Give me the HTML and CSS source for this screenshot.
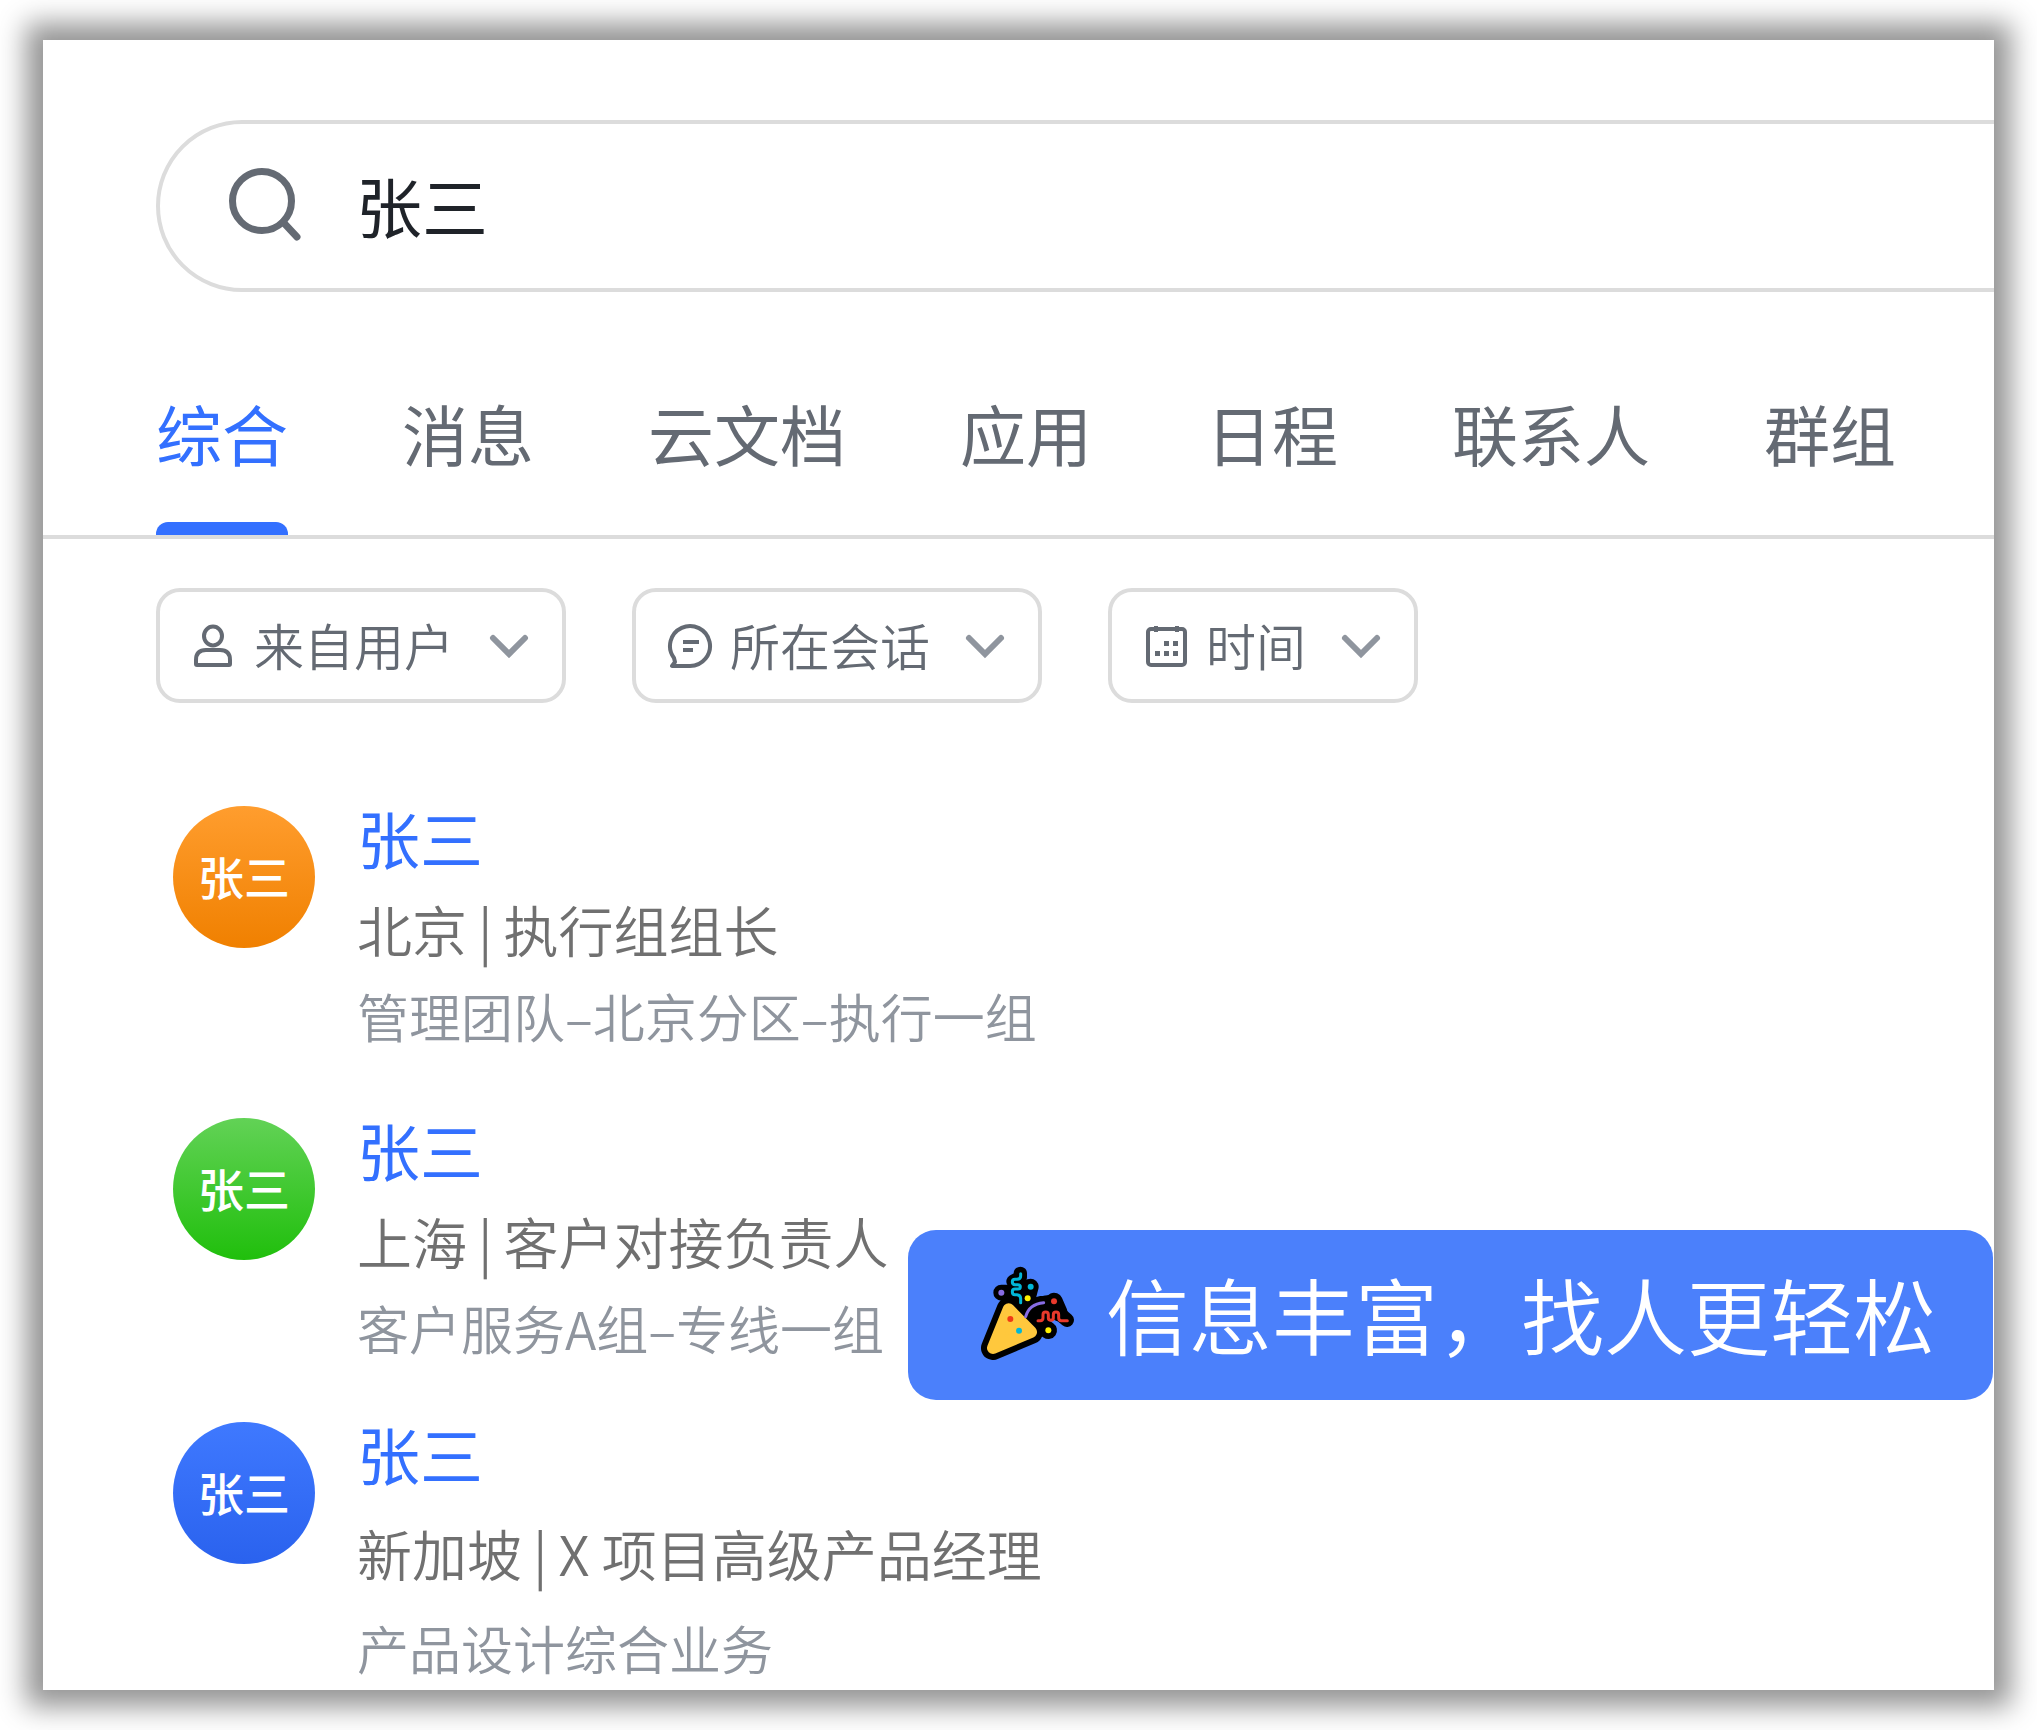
FILE: index.html
```html
<!DOCTYPE html>
<html lang="zh-CN">
<head>
	<meta charset="UTF-8">
	<meta name="viewport" content="width=device-width, initial-scale=1">
	<title>搜索</title>
	<link rel="stylesheet" href="styles.css">
</head>
<body>
	<div class="card">
		<label class="search">
			<svg class="search-icon" viewBox="0 0 76 76" aria-hidden="true">
				<circle cx="34" cy="33" r="29.5"/>
				<path d="M55 54L69 69"/>
			</svg>
			<input type="text" class="search-input" aria-label="搜索" value="张三">
		</label>

		<nav class="tabs">
			<a href="#" class="active">综合</a>
			<a href="#">消息</a>
			<a href="#">云文档</a>
			<a href="#">应用</a>
			<a href="#">日程</a>
			<a href="#">联系人</a>
			<a href="#">群组</a>
		</nav>

		<div class="filters">
			<label class="filter">
				<svg class="filter-icon" viewBox="0 0 48 48" aria-hidden="true">
					<ellipse cx="23" cy="14" rx="9" ry="9.5"/>
					<path d="M6 42V38Q6 28 16 28H30Q40 28 40 38V42Q40 43 39 43H7Q6 43 6 42Z"/>
				</svg>
				<select aria-label="来自用户"><option>来自用户</option></select>
				<svg class="arrow" viewBox="0 0 42 28" aria-hidden="true"><path d="M5 6L21 22L37 6"/></svg>
			</label>
			<label class="filter">
				<svg class="filter-icon" viewBox="0 0 48 48" aria-hidden="true">
					<path d="M6 44H24A20 20 0 1 0 8 36L9 40Z"/>
					<path d="M17 20H33M17 28H27"/>
				</svg>
				<select aria-label="所在会话"><option>所在会话</option></select>
				<svg class="arrow" viewBox="0 0 42 28" aria-hidden="true"><path d="M5 6L21 22L37 6"/></svg>
			</label>
			<label class="filter">
				<svg class="filter-icon" viewBox="0 0 48 48" aria-hidden="true">
					<rect x="6" y="7" width="37" height="36" rx="3"/>
					<path d="M14 4V10M35 4V10"/>
					<path class="dots" d="M22 19h5v5h-5zM31 19h5v5h-5zM13 29h5v5h-5zM22 29h5v5h-5zM31 29h5v5h-5z"/>
				</svg>
				<select aria-label="时间"><option>时间</option></select>
				<svg class="arrow" viewBox="0 0 42 28" aria-hidden="true"><path d="M5 6L21 22L37 6"/></svg>
			</label>
		</div>

		<ul class="results">
			<li class="result">
				<span class="avatar orange">张三</span>
				<div class="info">
					<a href="#" class="name">张三</a>
					<p class="job">北京<span class="bar">|</span>执行组组长</p>
					<p class="dept">管理团队–北京分区–执行一组</p>
				</div>
			</li>
			<li class="result">
				<span class="avatar green">张三</span>
				<div class="info">
					<a href="#" class="name">张三</a>
					<p class="job">上海<span class="bar">|</span>客户对接负责人</p>
					<p class="dept">客户服务A组–专线一组</p>
				</div>
			</li>
			<li class="result result-last">
				<span class="avatar blue">张三</span>
				<div class="info">
					<a href="#" class="name">张三</a>
					<p class="job">新加坡<span class="bar">|</span>X 项目高级产品经理</p>
					<p class="dept">产品设计综合业务</p>
				</div>
			</li>
		</ul>

		<div class="banner">
			<svg class="party" viewBox="32 50 282 282" aria-hidden="true">
				<!-- black outline -->
				<g class="outline">
					<path d="M115 180L68 296L182 248Z" stroke-width="72"/>
					<path d="M150 72V84L128 96L150 114L130 134L150 160" stroke-width="40"/>
					<path d="M93 130L140 130L181 112L172 147" stroke-width="48"/>
					<path d="M172 200Q185 160 222 160L251 156" stroke-width="42"/>
					<path d="M205 212L225 194L250 190L264 190L290 212" stroke-width="42"/>
					<path d="M251 156L266 190M200 220L234 243" stroke-width="52"/>
				</g>
				<!-- cone -->
				<path d="M115 180L68 296L182 248Z" fill="#ffc83d" stroke="#ffc83d" stroke-width="36" stroke-linejoin="round"/>
				<circle cx="120" cy="209" r="9" fill="#f03a17"/>
				<circle cx="146" cy="244" r="9" fill="#00b7d8"/>
				<!-- streamers -->
				<g fill="none" stroke-width="9" stroke-linecap="round">
					<path d="M151 73V80Q151 90 140 90H134Q126 90 126 98Q126 106 134 106H142Q150 106 150 112Q150 119 142 119H134Q126 119 126 127Q126 136 134 136H140Q151 137 151 148V160" stroke="#00b7d8"/>
					<path d="M166 202Q176 164 220 160" stroke="#886ce4"/>
					<path d="M203 214H210Q218 214 218 206V196Q218 188 226 188Q234 188 234 196V206Q234 213 242 213Q249 213 249 206V196Q249 188 257 188Q265 188 265 196V206Q265 214 273 214H291" stroke="#e8392b"/>
				</g>
				<circle cx="93" cy="130" r="9" fill="#886ce4"/>
				<circle cx="181" cy="112" r="9" fill="#00b7d8"/>
				<circle cx="172" cy="147" r="9" fill="#fff100"/>
				<circle cx="251" cy="156" r="9" fill="#e8392b"/>
				<circle cx="234" cy="243" r="9" fill="#fff100"/>
			</svg>
			<span>信息丰富，找人更轻松</span>
		</div>
	</div>
</body>
</html>
```
FILE: styles.css
```css
*{
	box-sizing: border-box;
}
body,ul,p{
	margin: 0;
	padding: 0;
}
body{
	padding: 40px 43px;
	background: #fff;
	color: #646a73;
	font-family: "Noto Sans CJK SC", sans-serif;
	font-weight: 350;
}
ul{
	list-style-type: none;
}
a{
	color: inherit;
	text-decoration: none;
}
.card{
	position: relative;
	overflow: hidden;
	padding: 80px 0 2px;
	background: #fff;
	box-shadow: 0 0 26px 17px rgba(0,0,0,.42);
}

/* search box, runs out past the right edge */
.search{
	display: flex;
	align-items: center;
	gap: 52px;
	height: 172px;
	margin: 0 -100px 0 113px;
	padding-left: 68px;
	border: 4px solid #dcdcdc;
	border-radius: 86px;
}
.search-icon{
	flex: none;
	width: 76px;
	height: 76px;
	fill: none;
	stroke: #646a73;
	stroke-width: 7;
	stroke-linecap: round;
}
.search-input{
	flex: 1;
	min-width: 0;
	height: 100px;
	padding: 0 0 4px;
	border: 0;
	outline: 0;
	background: none;
	color: #1f2329;
	font: inherit;
	font-size: 66px;
	font-weight: 400;
}

/* tabs */
.tabs{
	display: flex;
	gap: 114px;
	margin-top: 96px;
	padding-left: 113px;
	border-bottom: 4px solid #dcdcdc;
	font-size: 66px;
	font-weight: 400;
	line-height: 88px;
	white-space: nowrap;
}
.tabs a{
	position: relative;
	padding-bottom: 59px;
}
.tabs .active{
	color: #3370ff;
}
.tabs .active::after{
	content: "";
	position: absolute;
	left: 0;
	right: 0;
	bottom: 0;
	height: 13px;
	border-radius: 12px 12px 0 0;
	background: #3370ff;
}

/* filters */
.filters{
	display: flex;
	gap: 66px;
	padding: 49px 0 0 113px;
}
.filter{
	display: flex;
	align-items: center;
	height: 115px;
	padding: 0 32px 0 30px;
	border: 4px solid #dcdcdc;
	border-radius: 24px;
}
.filter-icon{
	width: 48px;
	height: 48px;
	margin-right: 16px;
	fill: none;
	stroke: #646a73;
	stroke-width: 4;
	stroke-linejoin: round;
}
.filter-icon .dots{
	fill: #646a73;
	stroke: none;
}
.filter select{
	appearance: none;
	padding: 0 0 4px;
	border: 0;
	outline: 0;
	background: none;
	color: #646a73;
	font: inherit;
	font-size: 50px;
}
.arrow{
	width: 42px;
	height: 28px;
	margin-left: 34px;
	fill: none;
	stroke: #8f959e;
	stroke-width: 6;
	stroke-linecap: round;
	pointer-events: none;
}

/* results */
.results{
	margin-top: 97px;
	padding-left: 130px;
}
.result{
	display: flex;
	gap: 42px;
}
.result + .result{
	margin-top: 56px;
}
.results .result-last{
	margin-top: 48px;
}
.avatar{
	flex: none;
	width: 142px;
	height: 142px;
	margin-top: 6px;
	border-radius: 50%;
	color: #fff;
	font-size: 46px;
	font-weight: 500;
	line-height: 138px;
	text-align: center;
}
.orange{
	background: linear-gradient(#ff9d2e, #f08000);
}
.green{
	background: linear-gradient(#62d256, #20bf0c);
}
.blue{
	background: linear-gradient(#3f79ff, #2a62ee);
}
.info{
	display: flex;
	flex-direction: column;
	gap: 8px;
	line-height: 80px;
	white-space: nowrap;
}
.result-last .info{
	gap: 16px;
}
.name{
	padding-bottom: 6px;
	color: #3370ff;
	font-size: 63px;
	font-weight: 400;
	line-height: 74px;
}
.job{
	color: #707070;
	font-size: 55px;
}
.bar{
	margin: 0 11px;
}
.dept{
	color: #8f959e;
	font-size: 52px;
}

/* floating note over the list */
.banner{
	position: absolute;
	right: 1px;
	bottom: 290px;
	display: flex;
	align-items: center;
	gap: 31px;
	height: 170px;
	padding: 0 57px 4px 73px;
	border-radius: 28px;
	background: #4b80fb;
	color: #fff;
	font-size: 83px;
	white-space: nowrap;
}
.party{
	width: 94px;
	height: 94px;
}
.outline{
	fill: #000;
	stroke: #000;
	stroke-linecap: round;
	stroke-linejoin: round;
}
```
